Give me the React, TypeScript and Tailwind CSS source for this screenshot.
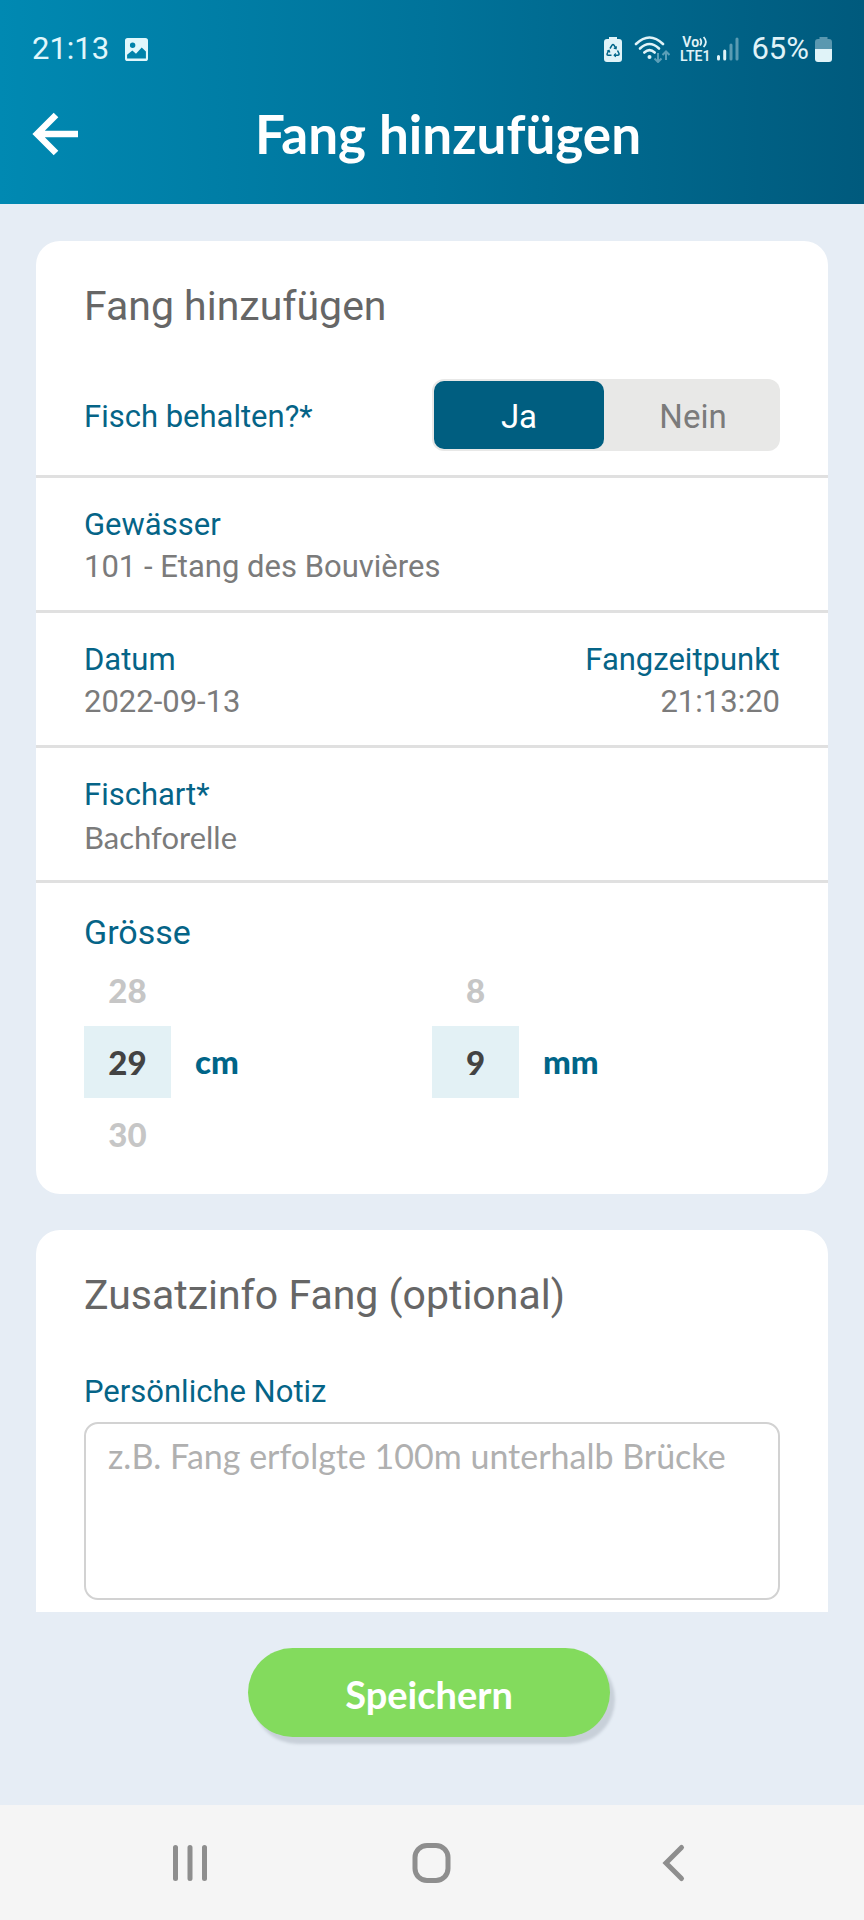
import { useState } from 'react';
import type { ReactNode } from 'react';

const WHEEL_CM = ['28', '29', '30'];
const WHEEL_MM = ['8', '9', ''];

const StatusBar = () => (
  <div className="flex h-[98px] items-center justify-between px-8">
    <div className="flex items-center gap-4 text-[#e0f7fc]">
      <span className="text-[31px] leading-10">21:13</span>
      <svg className="size-[23px]" viewBox="0 0 22 22" aria-hidden="true">
        <path
          fill="currentColor"
          fillRule="evenodd"
          d="M2.5 0h17A2.5 2.5 0 0 1 22 2.5v17a2.5 2.5 0 0 1-2.5 2.5h-17A2.5 2.5 0 0 1 0 19.5v-17A2.5 2.5 0 0 1 2.5 0ZM7.3 4.3a2.6 2.6 0 1 0 0 5.2 2.6 2.6 0 0 0 0-5.2ZM2 16v3.5h18V12.8L16 9l-5.5 6L7 12Z"
        />
      </svg>
    </div>
    <div className="flex items-center text-[#e0f3f8]">
      <svg className="h-[25px] w-[18px]" viewBox="0 0 18 25" aria-hidden="true">
        <path fill="currentColor" d="M5 0h8v2h2a3 3 0 0 1 3 3v17a3 3 0 0 1-3 3H3a3 3 0 0 1-3-3V5a3 3 0 0 1 3-3h2Z" />
        <g fill="none" stroke="#006588" strokeWidth="1.5">
          <path d="M6 11.5 8 8.2q1-1.2 2 0l2 3.3M13.5 13.5l1.5 3q.4 1.7-1.2 1.7H10.5M7.5 18.2H4.2Q2.6 18.2 3.2 16.5L4.8 13.5" />
          <path d="m12.3 9.3-.2 2.4-2.3-.6M11.8 16.5l-1.6 1.7 1.6 1.6M3 14.2l2-.9.9 2.2" strokeWidth="1.2" />
        </g>
      </svg>
      <svg className="ml-3 h-[27px] w-[36px]" viewBox="0 0 36 27" aria-hidden="true">
        <g fill="none" stroke="currentColor" strokeWidth="2.6" strokeLinecap="round">
          <path d="M2 8Q15.5-5 29 8" />
          <path d="M6 12.5q9.5-9 19 0" />
          <path d="M10.3 16.5q5.2-4.6 10.4 0" />
        </g>
        <circle cx="15.5" cy="21" r="2" fill="currentColor" />
        <g fill="none" stroke="#5b9fb8" strokeWidth="2">
          <path d="M24 17v9M20.5 22.5 24 26l3.5-3.5M32 24v-8.5M28.5 19l3.5-3.5 3.5 3.5" />
        </g>
      </svg>
      <div className="ml-[10px] flex flex-col items-center text-[14px] leading-[14px] font-semibold">
        <span className="flex items-center">
          Vo
          <svg className="h-[12px] w-[9px]" viewBox="0 0 9 12" fill="none" stroke="currentColor" strokeWidth="1.8" aria-hidden="true">
            <path d="M1 2.5q2.6 3.5 0 7M4.6 1q4.600 5 0 10" />
          </svg>
        </span>
        <span>LTE1</span>
      </div>
      <svg className="ml-[6px] h-[24px] w-[23px]" viewBox="0 0 23 24" aria-hidden="true">
        <g stroke="currentColor" strokeWidth="3" strokeLinecap="round">
          <path d="M2.5 19.5v2.5M8.7 14v8" />
          <path d="M15 8v14M21 2v20" opacity=".4" />
        </g>
      </svg>
      <span className="ml-3 text-[31px] leading-10">65%</span>
      <svg className="ml-[6px] h-[25px] w-[17px]" viewBox="0 0 17 25" aria-hidden="true">
        <path fill="currentColor" opacity=".4" d="M4.5 0h8v2H14a3 3 0 0 1 3 3v7H0V5a3 3 0 0 1 3-3h1.500Z" />
        <path fill="currentColor" d="M0 12h17v10a3 3 0 0 1-3 3H3a3 3 0 0 1-3-3Z" />
      </svg>
    </div>
  </div>
);

const Row = ({ children }: { children: ReactNode }) => (
  <div className="flex justify-between border-b-3 border-[#e0e0e0] px-12 pt-[25px] pb-[22px]">{children}</div>
);

const Field = ({ label, value, right, lato }: { label: string; value: string; right?: boolean; lato?: boolean }) => (
  <dl className={right ? 'text-right' : ''}>
    <dt className="text-[31px] leading-[43px] text-[#056487]">{label}</dt>
    <dd className={`text-[31px] leading-[42px] text-[#7b7b7b] ${lato ? 'font-[Lato,sans-serif]' : ''}`}>{value}</dd>
  </dl>
);

const Wheel = ({ values, unit }: { values: string[]; unit: string }) => (
  <div className="flex flex-1 items-center gap-6 font-[Lato,sans-serif] text-[33px] font-black">
    <div role="listbox" aria-label={unit} className="w-[87px] text-center leading-[72px]">
      {values.map((v, i) => (
        <div
          key={i}
          role="option"
          aria-selected={i === 1}
          className={`h-[72px] ${i === 1 ? 'bg-[#e3f1f5] text-[#434343]' : 'text-[#c6c6c6]'}`}
        >
          {v}
        </div>
      ))}
    </div>
    <span className="text-[#006588]">{unit}</span>
  </div>
);

export default function App() {
  const [keep, setKeep] = useState(true);
  const [note, setNote] = useState('');

  return (
    <div className="flex min-h-screen flex-col bg-[#e6edf5] font-[Roboto,sans-serif]">
      <header className="h-[204px] bg-linear-to-r from-[#0089b2] via-[#00739a] to-[#005a7d]">
        <StatusBar />
        <div className="grid grid-cols-[112px_1fr_80px] items-center px-8">
          <button type="button" aria-label="Zurück" className="text-white">
            <svg className="h-[44px] w-[46px]" viewBox="0 0 46 44" fill="none" stroke="currentColor" strokeWidth="6.5" aria-hidden="true">
              <path d="M24 3 5 22l19 19M5 22h41" />
            </svg>
          </button>
          <h1 className="text-center font-[Lato,sans-serif] text-[53px] leading-[72px] font-bold text-white">Fang hinzufügen</h1>
        </div>
      </header>

      <main className="flex flex-col gap-9 px-9 pt-[37px]">
        <section className="rounded-3xl bg-white pb-6">
          <h2 className="px-12 pt-10 text-[41px] leading-[50px] text-[#666666]">Fang hinzufügen</h2>
          <div className="mt-12 flex items-center justify-between border-b-3 border-[#e0e0e0] px-12 pb-6">
            <span id="keep" className="pt-1 text-[31px] text-[#056487]">Fisch behalten?*</span>
            <div role="group" aria-labelledby="keep" className="flex h-[72px] w-1/2 gap-1 rounded-xl bg-[#e8e8e7] p-[2px] text-[33px]">
              {['Ja', 'Nein'].map((label) => {
                const active = keep === (label === 'Ja');
                return (
                  <button
                    key={label}
                    type="button"
                    aria-pressed={active}
                    onClick={() => setKeep(label === 'Ja')}
                    className={`flex-1 rounded-[10px] pt-1 ${active ? 'bg-[#005e80] text-white' : 'text-[#7b7b7b]'}`}
                  >
                    {label}
                  </button>
                );
              })}
            </div>
          </div>
          <Row>
            <Field label="Gewässer" value="101 - Etang des Bouvières" />
          </Row>
          <Row>
            <Field label="Datum" value="2022-09-13" />
            <Field label="Fangzeitpunkt" value="21:13:20" right />
          </Row>
          <Row>
            <Field label="Fischart*" value="Bachforelle" lato />
          </Row>
          <div className="px-12 pt-7">
            <h3 className="text-[34px] leading-[43px] text-[#056487]">Grösse</h3>
            <div className="flex">
              <Wheel values={WHEEL_CM} unit="cm" />
              <Wheel values={WHEEL_MM} unit="mm" />
            </div>
          </div>
        </section>

        <section className="rounded-t-3xl bg-white px-12 pb-3">
          <h2 className="pt-10 text-[41px] leading-[50px] text-[#666666]">Zusatzinfo Fang (optional)</h2>
          <label htmlFor="note" className="mt-[50px] block text-[31px] leading-[44px] text-[#056487]">Persönliche Notiz</label>
          <textarea
            id="note"
            value={note}
            onChange={(e) => setNote(e.target.value)}
            placeholder="z.B. Fang erfolgte 100m unterhalb Brücke"
            className="mt-2 block h-[178px] w-full resize-none rounded-[14px] border-2 border-[#d2d2d2] px-[22px] py-[10px] font-[Lato,sans-serif] text-[34px] leading-[44px] placeholder:text-[#b0b0b0]"
          />
        </section>
      </main>

      <div className="flex justify-center pt-9 pr-[6px] pb-[66px]">
        <button
          type="button"
          className="h-[89px] w-[362px] rounded-full bg-[#83db5d] pt-1 font-[Lato,sans-serif] text-[38px] font-bold text-white shadow-[5px_7px_3px_#c8d0d9]"
        >
          Speichern
        </button>
      </div>

      <nav className="mt-auto grid h-[115px] grid-cols-3 items-center justify-items-center bg-[#f5f5f5] px-[69px] text-[#8e8e8e]">
        <button type="button" aria-label="Letzte Apps">
          <svg className="h-[40px] w-[40px]" viewBox="0 0 40 40" stroke="currentColor" strokeWidth="5" strokeLinecap="round" aria-hidden="true">
            <path d="M5.5 4.5v31M20 4.5v31M34.5 4.5v31" />
          </svg>
        </button>
        <button type="button" aria-label="Startseite">
          <svg className="h-[40px] w-[40px]" viewBox="0 0 40 40" fill="none" stroke="currentColor" strokeWidth="5" aria-hidden="true">
            <rect x="3" y="2.5" width="33" height="35" rx="12" />
          </svg>
        </button>
        <button type="button" aria-label="Zurück">
          <svg className="h-[40px] w-[40px]" viewBox="0 0 40 40" fill="none" stroke="currentColor" strokeWidth="5" strokeLinecap="round" aria-hidden="true">
            <path d="M27.5 4.5 12 20l15.5 15.5" />
          </svg>
        </button>
      </nav>
    </div>
  );
}
